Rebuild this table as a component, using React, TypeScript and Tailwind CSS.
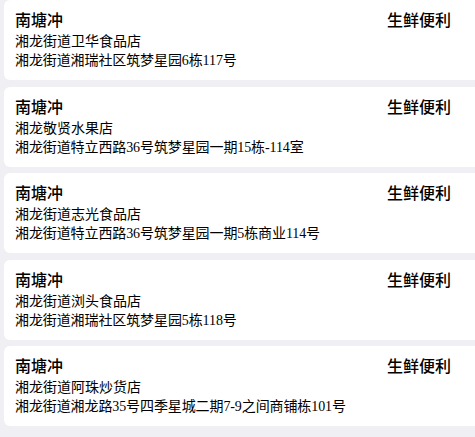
const shops = [
  { name: "湘龙街道卫华食品店", addr: "湘龙街道湘瑞社区筑梦星园6栋117号" },
  { name: "湘龙敬贤水果店", addr: "湘龙街道特立西路36号筑梦星园一期15栋-114室" },
  { name: "湘龙街道志光食品店", addr: "湘龙街道特立西路36号筑梦星园一期5栋商业114号" },
  { name: "湘龙街道浏头食品店", addr: "湘龙街道湘瑞社区筑梦星园5栋118号" },
  { name: "湘龙街道阿珠炒货店", addr: "湘龙街道湘龙路35号四季星城二期7-9之间商铺栋101号" },
];

const App = () => {
  return (
    <div
      className="min-h-screen overflow-hidden bg-[#efeff4] text-black"
      style={{ fontFamily: '"Liberation Serif", "Noto Sans CJK SC", serif' }}
    >
      <div className="flex flex-col gap-[6.5px]">
        {shops.map((shop, index) => (
          <div
            key={index}
            className="ml-1 -mr-2 h-[80px] rounded-md bg-white pl-[11px] pr-[32px] pt-[10px]"
          >
            <div className="flex justify-between text-[16px] font-medium leading-[22px]">
              <span>南塘冲</span>
              <span>生鲜便利</span>
            </div>
            <p className="text-[14px] leading-[19px]">{shop.name}</p>
            <p className="text-[14px] leading-[19px] tracking-[-0.1px]">{shop.addr}</p>
          </div>
        ))}
      </div>
    </div>
  );
};

export default App;
